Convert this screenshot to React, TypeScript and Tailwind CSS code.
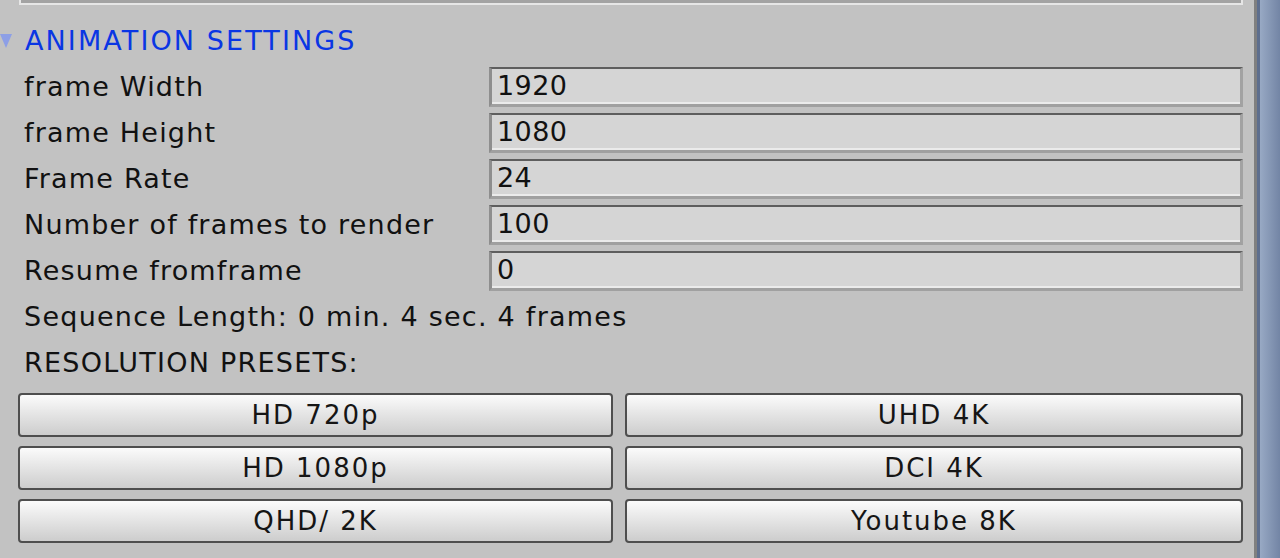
import React from "react";

const fields = [
  { label: "frame Width", value: "1920" },
  { label: "frame Height", value: "1080" },
  { label: "Frame Rate", value: "24" },
  { label: "Number of frames to render", value: "100" },
  { label: "Resume fromframe", value: "0" },
];

const presets = ["HD 720p", "UHD 4K", "HD 1080p", "DCI 4K", "QHD/ 2K", "Youtube 8K"];

function Field({ label, value }: { label: string; value: string }) {
  return (
    <div className="flex h-[40px] items-center">
      <div className="w-[489px] shrink-0 pl-[24px] text-[27px] tracking-[1.2px] text-[#111]">{label}</div>
      <div className="flex h-[40px] flex-1 items-center border-t-2 border-l-[3px] border-r-[3px] border-b-[3px] border-t-[#5e5e5e] border-l-[#8e8e8e] border-r-[#a2a2a2] border-b-[#a0a0a0] bg-[#d5d5d5] pl-[5px] text-[27px] tracking-[0.4px] text-[#111] shadow-[inset_0_-2px_0_#ebebeb]">
        {value}
      </div>
    </div>
  );
}

export default function App() {
  return (
    <div className="flex h-[558px] w-[1280px] overflow-hidden bg-[#c2c2c2] font-['DejaVu_Sans',sans-serif]">
      <div className="flex w-[1254px] shrink-0 flex-col pr-[11px]">
        {/* bottom edge of the previous box */}
        <div className="ml-[19px] h-[5px] border-x-2 border-b-2 border-[#e6e6e6] bg-[#a3a3a3]" />

        <div className="mt-[21px] flex h-[30px] items-center">
          <svg width="12" height="14" viewBox="0 0 12 14" className="mr-[13px] shrink-0">
            <polygon points="0,0 12,0 6,14" fill="#8d9fe6" />
          </svg>
          <span className="text-[27px] tracking-[2.1px] text-[#0a36e4]">ANIMATION SETTINGS</span>
        </div>

        <div className="mt-[11px] flex flex-col gap-[6px]">
          {fields.map((f) => (
            <Field key={f.label} label={f.label} value={f.value} />
          ))}
          <div className="flex h-[40px] items-center pl-[24px] text-[27px] tracking-[1.25px] text-[#111]">
            Sequence Length: 0 min. 4 sec. 4 frames
          </div>
          <div className="flex h-[40px] items-center pl-[24px] text-[27px] tracking-[1.25px] text-[#111]">
            RESOLUTION PRESETS:
          </div>
        </div>

        <div className="ml-[18px] mt-[10px] grid grid-cols-[595px_618px] gap-x-[12px] gap-y-[9px]">
          {presets.map((p) => (
            <button
              key={p}
              className="flex h-[44px] items-center justify-center rounded-[4px] border-2 border-[#4e4e4e] bg-gradient-to-b from-[#fbfbfb] to-[#cdcdcd] text-[26px] tracking-[2px] text-[#151515]"
            >
              {p}
            </button>
          ))}
        </div>
      </div>

      <div className="w-[3px] shrink-0 bg-[#808080]" />
      <div className="w-[3px] shrink-0 bg-[#5d6e8e]" />
      <div className="flex-1 bg-gradient-to-r from-[#98a9c4] to-[#7385a5]" />
    </div>
  );
}
